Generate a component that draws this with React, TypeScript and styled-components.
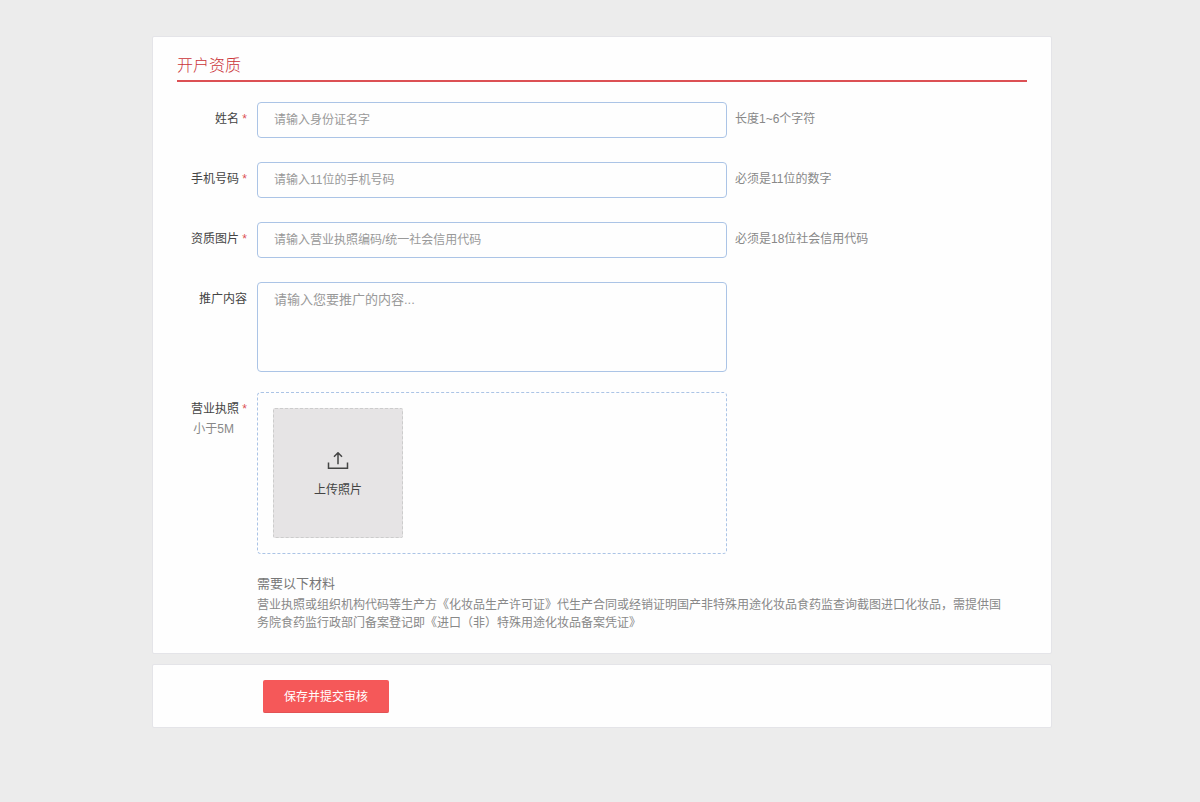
import React from "react";
import styled, { createGlobalStyle, css } from "styled-components";

const GlobalStyle = createGlobalStyle`
  *, *::before, *::after { box-sizing: border-box; }
  body {
    margin: 0;
    background: #ececec;
    color: #444;
    font-family: "Liberation Sans", "Noto Sans CJK SC", sans-serif;
    font-size: 12px;
    line-height: 20px;
  }
`;

const Page = styled.main`
  padding: 36px 16px 36px 20px;
`;

const Form = styled.form`
  display: flex;
  flex-direction: column;
  gap: 10px;
  max-width: 900px;
  margin: 0 auto;
`;

const Card = styled.section`
  background: #fefefe;
  border: 1px solid #e4e4e8;
  border-radius: 2px;
  padding: 15px 24px;
`;

const FormCard = styled(Card)`
  padding-bottom: 21px;
`;

const Title = styled.h1`
  margin: 0 0 20px;
  border-bottom: 2px solid #dc5054;
  color: #cb3338;
  font-size: 16px;
  font-weight: 300;
  line-height: 28px;
`;

const Fields = styled.div`
  display: flex;
  flex-direction: column;
  gap: 24px;
`;

const Row = styled.div`
  display: flex;
  align-items: flex-start;
`;

const LabelCell = styled.div`
  flex: 0 0 70px;
  margin-right: 10px;
  padding-top: 7px;
  text-align: right;
`;

const Label = styled.label`
  display: block;
  white-space: nowrap;
`;

const Required = styled.span`
  color: #dc5054;
`;

const SizeNote = styled.span`
  display: block;
  padding-right: 13px;
  color: #888;
`;

const control = css`
  flex: 0 1 470px;
  min-width: 0;
  background: #fefefe;
  border: 1px solid #abc4e6;
  border-radius: 4px;
`;

const textControl = css`
  ${control}
  margin: 0;
  padding: 0 16px;
  color: #444;
  font-family: inherit;
  outline: none;
  &::placeholder { color: #999; opacity: 1; }
  &:focus { border-color: #6f9fdc; }
`;

const TextInput = styled.input`
  ${textControl}
  height: 36px;
  font-size: 12px;
`;

const TextArea = styled.textarea`
  ${textControl}
  height: 90px;
  padding-top: 7px;
  font-size: 13px;
  line-height: 20px;
  resize: none;
`;

const Hint = styled.span`
  padding: 7px 0 0 8px;
  color: #888;
`;

const UploadRow = styled(Row)`
  margin-top: 20px;
`;

const UploadArea = styled.div`
  ${control}
  padding: 15px;
  border-style: dashed;
`;

const UploadTile = styled.label`
  display: flex;
  flex-direction: column;
  align-items: center;
  justify-content: center;
  gap: 10px;
  width: 130px;
  height: 130px;
  padding-top: 6px;
  background: #e6e4e5;
  border: 1px dashed #ccc;
  border-radius: 2px;
  cursor: pointer;
`;

const FileInput = styled.input`
  position: absolute;
  width: 1px;
  height: 1px;
  overflow: hidden;
  opacity: 0;
`;

const Materials = styled.div`
  margin: 20px 20px 0 80px;
  color: #888;
`;

const MaterialsTitle = styled.h2`
  margin: 0 0 2px;
  color: #777;
  font-size: 13px;
  font-weight: 400;
  line-height: 20px;
`;

const MaterialsText = styled.p`
  margin: 0;
  line-height: 18px;
`;

const Actions = styled(Card)`
  padding: 15px 110px 14px;
`;

const SubmitButton = styled.button`
  display: block;
  height: 33px;
  padding: 0 21px 2px;
  background: #f55859;
  border: 1px solid #e25254;
  border-width: 0 0 1px;
  border-radius: 2px;
  color: #fff;
  font-family: inherit;
  font-size: 12px;
  cursor: pointer;
`;

const UploadIcon = () => (
  <svg width="22" height="18" viewBox="0 0 22 18" fill="none" stroke="#444" strokeWidth="1.5" aria-hidden="true">
    <path d="M1.5 10.5V16.3H20.5V10.5" />
    <path d="M11 12.2V0.8M7 4.8L11 0.8L15 4.8" />
  </svg>
);

const textFields = [
  { id: "name", label: "姓名", placeholder: "请输入身份证名字", hint: "长度1~6个字符" },
  { id: "phone", label: "手机号码", placeholder: "请输入11位的手机号码", hint: "必须是11位的数字" },
  { id: "license", label: "资质图片", placeholder: "请输入营业执照编码/统一社会信用代码", hint: "必须是18位社会信用代码" },
];

export default function App() {
  return (
    <Page>
      <GlobalStyle />
      <Form onSubmit={(e: React.FormEvent) => e.preventDefault()}>
        <FormCard>
          <Title>开户资质</Title>
          <Fields>
            {textFields.map((f) => (
              <Row key={f.id}>
                <LabelCell>
                  <Label htmlFor={f.id}>
                    {f.label} <Required>*</Required>
                  </Label>
                </LabelCell>
                <TextInput id={f.id} type="text" placeholder={f.placeholder} aria-describedby={`${f.id}-hint`} />
                <Hint id={`${f.id}-hint`}>{f.hint}</Hint>
              </Row>
            ))}
            <Row>
              <LabelCell>
                <Label htmlFor="content">推广内容</Label>
              </LabelCell>
              <TextArea id="content" placeholder="请输入您要推广的内容..." />
            </Row>
          </Fields>
          <UploadRow>
            <LabelCell>
              <Label htmlFor="photo">
                营业执照 <Required>*</Required>
              </Label>
              <SizeNote>小于5M</SizeNote>
            </LabelCell>
            <UploadArea>
              <FileInput id="photo" type="file" accept="image/*" />
              <UploadTile htmlFor="photo">
                <UploadIcon />
                上传照片
              </UploadTile>
            </UploadArea>
          </UploadRow>
          <Materials>
            <MaterialsTitle>需要以下材料</MaterialsTitle>
            <MaterialsText>
              营业执照或组织机构代码等生产方《化妆品生产许可证》代生产合同或经销证明国产非特殊用途化妆品食药监查询截图进口化妆品，需提供国务院食药监行政部门备案登记即《进口（非）特殊用途化妆品备案凭证》
            </MaterialsText>
          </Materials>
        </FormCard>
        <Actions>
          <SubmitButton type="submit">保存并提交审核</SubmitButton>
        </Actions>
      </Form>
    </Page>
  );
}
